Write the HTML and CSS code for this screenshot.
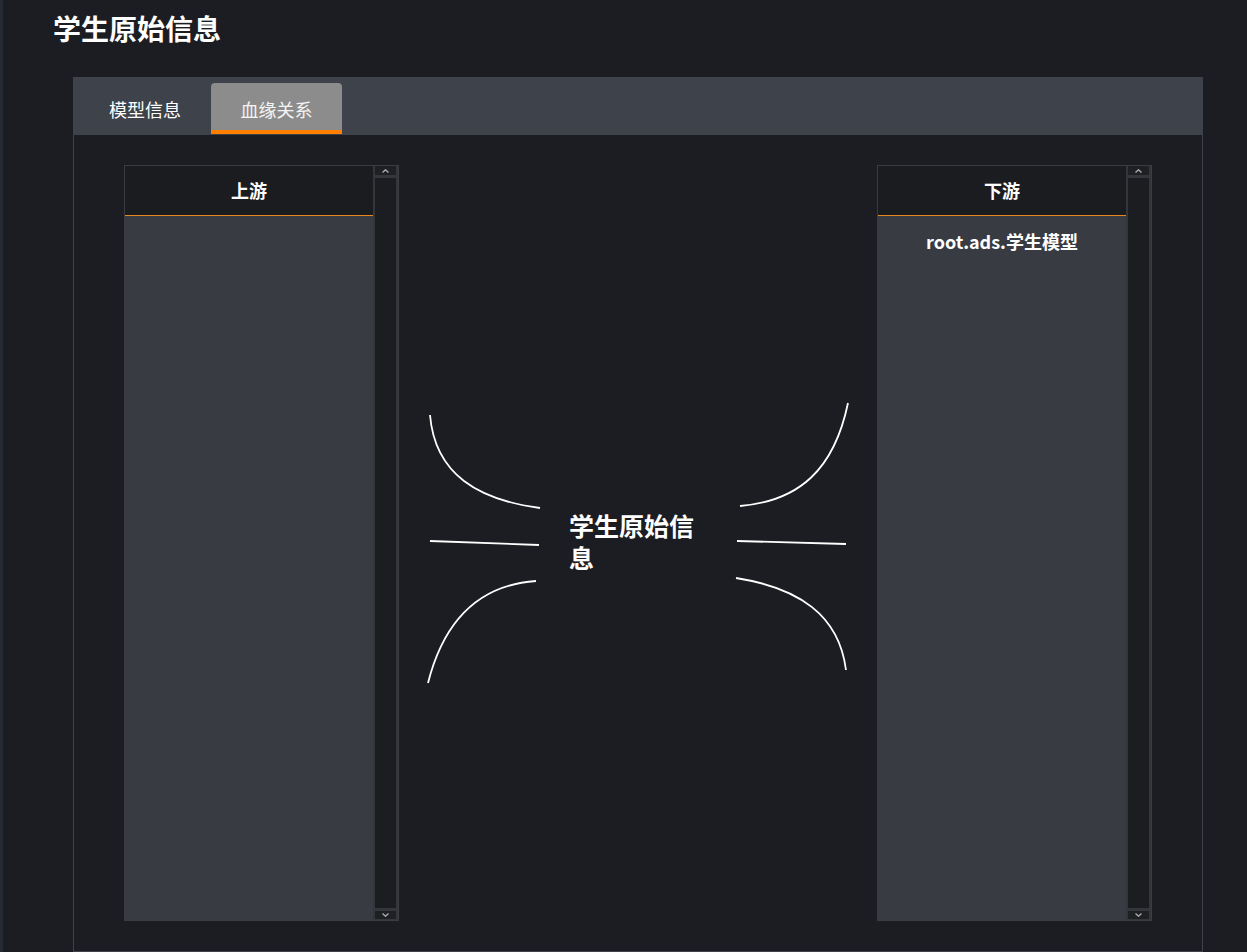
FILE: index.html
```html
<!DOCTYPE html>
<html lang="zh-CN">
<head>
<meta charset="utf-8">
<title>学生原始信息</title>
<link rel="stylesheet" href="styles.css">
</head>
<body>
<div class="page">
  <h1 class="title">学生原始信息</h1>
  <div class="panel">
    <div class="tabbar">
      <div class="tab">模型信息</div>
      <div class="tab active">血缘关系</div>
    </div>
    <div class="content">
      <div class="list">
        <div class="list-main">
          <div class="list-head">上游</div>
          <div class="list-body"></div>
        </div>
        <div class="scrollbar">
          <div class="sb-btn"><svg width="7" height="4" viewBox="0 0 7 4"><polyline points="0.5,3.5 3.5,0.8 6.5,3.5" fill="none" stroke="#a9a9ab" stroke-width="1.4"/></svg></div>
          <div class="sb-track"></div>
          <div class="sb-btn sb-down"><svg width="7" height="4" viewBox="0 0 7 4"><polyline points="0.5,0.5 3.5,3.2 6.5,0.5" fill="none" stroke="#a9a9ab" stroke-width="1.4"/></svg></div>
        </div>
      </div>
      <div class="graph">
        <svg class="links" width="478" height="756" viewBox="0 0 478 756">
          <g fill="none" stroke="#ffffff" stroke-width="1.8">
            <path d="M31,250 C36,310 80,335 141,343"/>
            <path d="M31,376 L140,380"/>
            <path d="M137,416 C80,420 45,455 29,518"/>
            <path d="M341,341 C400,336 435,305 449,238"/>
            <path d="M338,376 L447,379"/>
            <path d="M337,413 C400,423 440,450 447,505"/>
          </g>
        </svg>
        <div class="node">学生原始信息</div>
      </div>
      <div class="list">
        <div class="list-main">
          <div class="list-head">下游</div>
          <div class="list-body">
            <div class="list-item">root.ads.学生模型</div>
          </div>
        </div>
        <div class="scrollbar">
          <div class="sb-btn"><svg width="7" height="4" viewBox="0 0 7 4"><polyline points="0.5,3.5 3.5,0.8 6.5,3.5" fill="none" stroke="#a9a9ab" stroke-width="1.4"/></svg></div>
          <div class="sb-track"></div>
          <div class="sb-btn sb-down"><svg width="7" height="4" viewBox="0 0 7 4"><polyline points="0.5,0.5 3.5,3.2 6.5,0.5" fill="none" stroke="#a9a9ab" stroke-width="1.4"/></svg></div>
        </div>
      </div>
    </div>
  </div>
</div>
</body>
</html>
```

FILE: styles.css
```css
* { box-sizing: border-box; }

html, body {
  margin: 0;
  padding: 0;
  background: #1c1d22;
  height: 100%;
  overflow: hidden;
}

body {
  font-family: "Noto Sans CJK SC", "Noto Sans", sans-serif;
  color: #ffffff;
}

.page {
  border-left: 3px solid #262a33;
  min-height: 100%;
}

.title {
  margin: 0 0 21px 0;
  padding-left: 50px;
  height: 56px;
  line-height: 56px;
  font-size: 28px;
  font-weight: 700;
  color: #ffffff;
}

.panel {
  margin: 0 44px 0 70px;
  border: 1px solid #3e424b;
  height: 875px;
  display: flex;
  flex-direction: column;
}

.tabbar {
  height: 57px;
  background: #3e424b;
  display: flex;
  align-items: flex-start;
  padding: 5px 0 0 5px;
}

.tab {
  width: 132px;
  padding-top: 5px;
  text-align: center;
  line-height: 42px;
  font-size: 18px;
  color: #ffffff;
  border-bottom: 4px solid transparent;
  border-radius: 4px 4px 0 0;
}

.tab.active {
  width: 131px;
  background: #8c8c8c;
  border-bottom-color: #ff8000;
  color: #f4f4f4;
}

.content {
  flex: 1;
  display: flex;
  padding: 30px 50px 30px 50px;
}

.list {
  width: 275px;
  border: 1px solid #3b3c41;
  display: flex;
}

.list-main {
  flex: 1;
  display: flex;
  flex-direction: column;
}

.list-head {
  height: 50px;
  line-height: 49px;
  border-bottom: 1px solid #e8861f;
  background: #1b1c20;
  text-align: center;
  font-size: 18px;
  font-weight: 700;
}

.list-body {
  flex: 1;
  background: #393b43;
}

.list-item {
  line-height: 50px;
  text-align: center;
  font-size: 18px;
  font-weight: 700;
  color: #ffffff;
}

.scrollbar {
  width: 25px;
  background: #35363b;
  padding: 0 2px 1px;
  display: flex;
  flex-direction: column;
  gap: 3px;
}

.sb-btn {
  height: 9px;
  background: #1f2024;
  display: flex;
  align-items: center;
  justify-content: center;
}

.sb-btn.sb-down {
  height: 8px;
}

.sb-track {
  flex: 1;
  background: #1c1d21;
}

.graph {
  flex: 1;
  position: relative;
}

.links {
  position: absolute;
  left: 0;
  top: 0;
}

.node {
  position: absolute;
  left: 170px;
  top: 344px;
  width: 130px;
  font-size: 25px;
  line-height: 32px;
  font-weight: 700;
  color: #ffffff;
}
```
